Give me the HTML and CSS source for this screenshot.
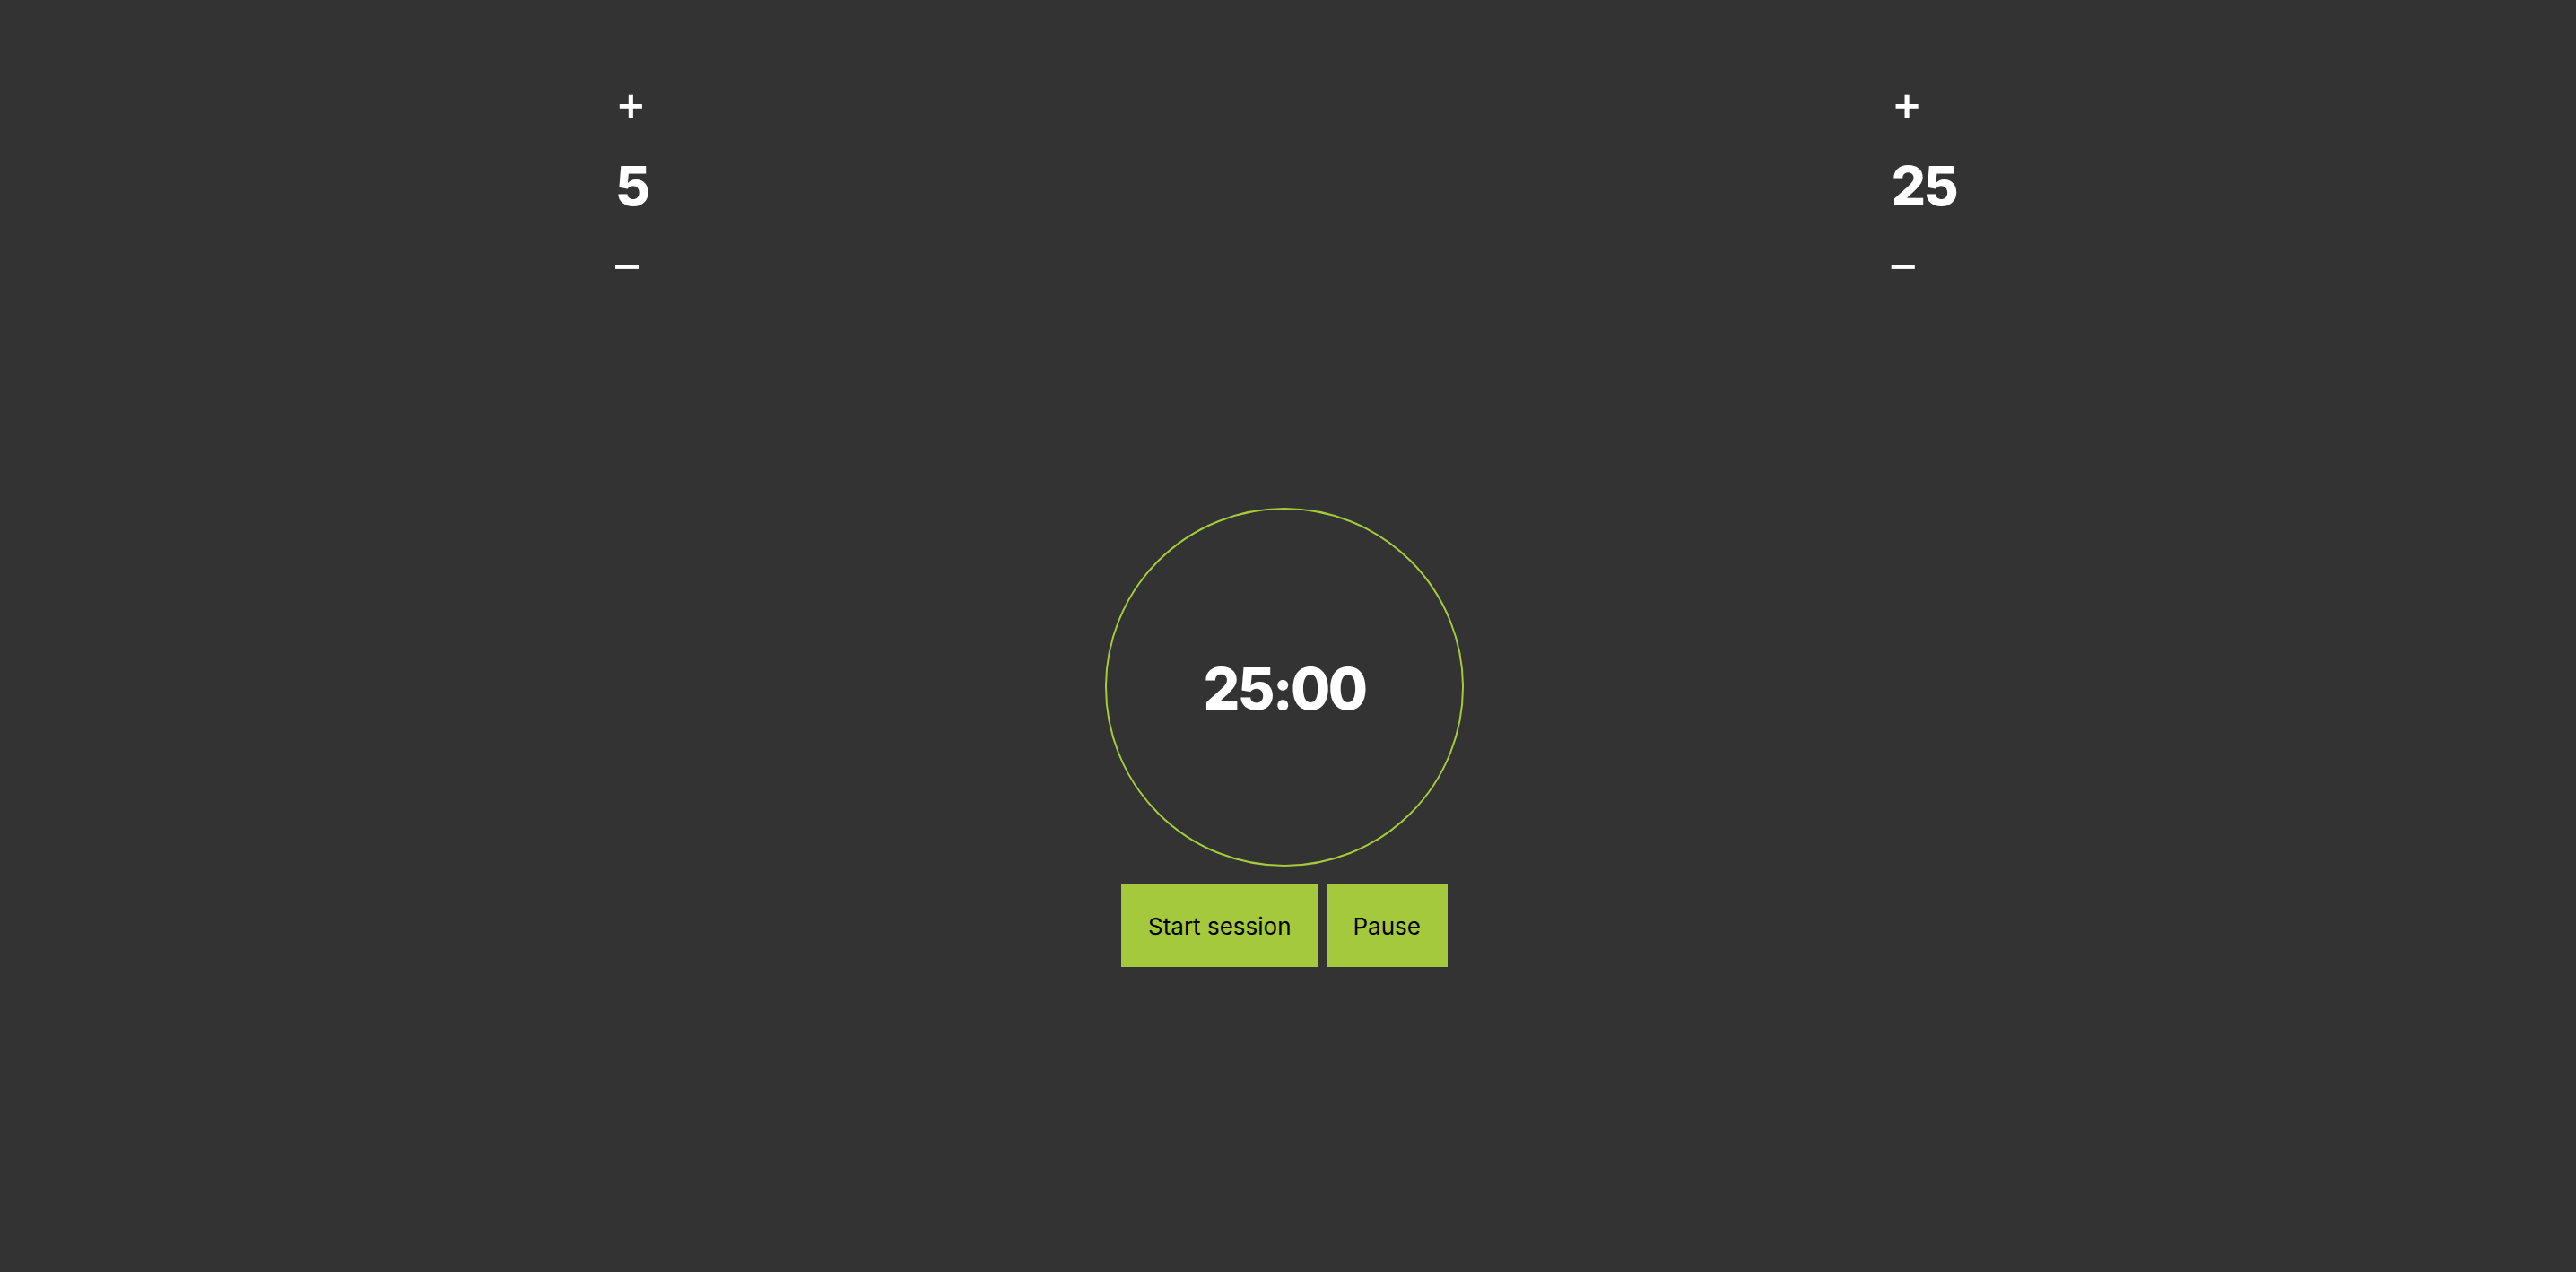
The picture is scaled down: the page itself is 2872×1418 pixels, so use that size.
FILE: index.html
```html
<!DOCTYPE html>
<html lang="en">
<head>
<meta charset="utf-8">
<title>Pomodoro</title>
<link rel="stylesheet" href="styles.css">
</head>
<body>
<main class="app">
  <section class="settings">
    <div class="setting">
      <button class="adjust plus">+</button>
      <div class="value">5</div>
      <button class="adjust minus">–</button>
    </div>
    <div class="setting">
      <button class="adjust plus">+</button>
      <div class="value">25</div>
      <button class="adjust minus">–</button>
    </div>
  </section>
  <section class="timer">
    <div class="ring"><span class="time">25:00</span></div>
    <div class="controls">
      <button class="btn">Start session</button>
      <button class="btn">Pause</button>
    </div>
  </section>
</main>
</body>
</html>
```

FILE: styles.css
```css
html, body {
  margin: 0;
  padding: 0;
  background: #333333;
  height: 100%;
}
body {
  font-family: Inter, "Noto Sans", sans-serif;
  color: #ffffff;
}
.app {
  display: flex;
  flex-direction: column;
  padding-right: 8px;
}
.settings {
  display: flex;
  justify-content: space-between;
  padding: 70px 683px 0 686px;
}
.setting {
  display: flex;
  flex-direction: column;
  align-items: flex-start;
}
.adjust {
  background: none;
  border: none;
  padding: 0;
  margin: 0;
  color: #ffffff;
  font-family: Inter, sans-serif;
  font-size: 52px;
  font-weight: 500;
  line-height: 90px;
  height: 90px;
  cursor: pointer;
}
.value {
  box-sizing: border-box;
  height: 90px;
  padding-top: 4px;
  font-size: 60px;
  font-weight: 800;
  letter-spacing: -2.5px;
  line-height: 86px;
}
.timer {
  display: flex;
  flex-direction: column;
  align-items: center;
  margin-top: 226px;
}
.ring {
  width: 400px;
  height: 400px;
  box-sizing: border-box;
  border: 2px solid #a6cb3a;
  border-radius: 50%;
  display: flex;
  align-items: center;
  justify-content: center;
}
.time {
  font-size: 64px;
  font-weight: 800;
  letter-spacing: -2.5px;
  margin-top: 2px;
}
.controls {
  display: flex;
  gap: 9px;
  margin-top: 20px;
}
.btn {
  background: #a4c93d;
  border: none;
  color: #000000;
  font-family: Inter, sans-serif;
  font-size: 26px;
  font-weight: 400;
  height: 92px;
  padding: 0 30px;
  cursor: pointer;
}
```
